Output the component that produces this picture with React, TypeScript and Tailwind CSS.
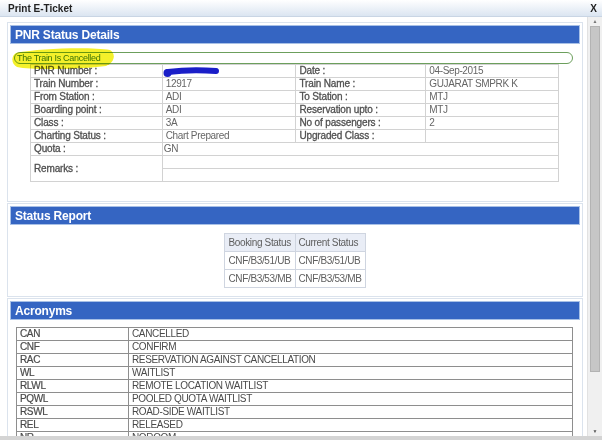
import React from 'react';

const details: [string, string, string, string][] = [
    ['PNR Number :', '', 'Date :', '04-Sep-2015'],
    ['Train Number :', '12917', 'Train Name :', 'GUJARAT SMPRK K'],
    ['From Station :', 'ADI', 'To Station :', 'MTJ'],
    ['Boarding point :', 'ADI', 'Reservation upto :', 'MTJ'],
    ['Class :', '3A', 'No of passengers :', '2'],
    ['Charting Status :', 'Chart Prepared', 'Upgraded Class :', ''],
];

const acronyms: [string, string][] = [
    ['CAN', 'CANCELLED'],
    ['CNF', 'CONFIRM'],
    ['RAC', 'RESERVATION AGAINST CANCELLATION'],
    ['WL', 'WAITLIST'],
    ['RLWL', 'REMOTE LOCATION WAITLIST'],
    ['PQWL', 'POOLED QUOTA WAITLIST'],
    ['RSWL', 'ROAD-SIDE WAITLIST'],
    ['REL', 'RELEASED'],
    ['NR', 'NOROOM'],
];

const Header = ({ title }: { title: string }) => (
    <div className="h-[19px] bg-[#3565c2] border border-[#a8c0e6] flex items-center pl-[4px] text-white font-bold text-[12px] tracking-[-0.2px]">
        {title}
    </div>
);

const cell = 'border border-[#d2d2d2] h-[13px] px-[3px] leading-[12px] text-[10px]';
const label = `${cell} tracking-[-0.15px] text-[#505050] [-webkit-text-stroke:0.3px_#505050]`;
const value = `${cell} tracking-[-0.35px] text-[#666]`;
const stat = 'border border-[#cfd5e0] h-[18px] px-[3px] text-[10px] tracking-[-0.35px] text-[#5e5e5e]';

export default function App() {
    return (
        <div className="w-[602px] h-[440px] overflow-hidden bg-white flex flex-col font-['Liberation_Sans',Arial,sans-serif]">
            {/* Title bar */}
            <div className="h-[17px] shrink-0 bg-gradient-to-b from-[#ffffff] to-[#dbe5f1] border-b border-[#c9d5e4] flex items-center justify-between pl-[8px] pr-[5px]">
                <span className="text-[10px] font-bold text-[#222]">Print E-Ticket</span>
                <span className="text-[10px] font-bold text-[#222]">X</span>
            </div>

            <div className="flex flex-1 min-h-0">
                {/* Content */}
                <div className="w-[587px] pt-[5px] overflow-hidden">
                    {/* PNR Status Details */}
                    <div className="ml-[7px] w-[576px] border border-[#dbe3ed] p-[2px] pb-[19px]">
                        <Header title="PNR Status Details" />
                        <div className="relative ml-[4px] mt-[8px] w-[559px] h-[12px] border border-[#6c9f5c] rounded-[6px] flex items-center pl-[2px]">
                            <span className="text-[9px] tracking-[-0.3px] text-[#3f7a16] leading-none">The Train Is Cancelled</span>
                            <svg className="absolute left-[-4px] top-[-8px] mix-blend-multiply" width="106" height="26" viewBox="0 0 106 26">
                                <path d="M5 8 C 30 3, 80 2, 99 5 C 105 8, 104 18, 95 21 C 60 25, 20 25, 6 22 C 0 19, 0 11, 5 8 Z" fill="#f4f02a" />
                            </svg>
                        </div>
                        <table className="ml-[20px] w-[529px] border-collapse">
                            <colgroup>
                                <col className="w-[132px]" />
                                <col className="w-[134px]" />
                                <col className="w-[130px]" />
                                <col className="w-[133px]" />
                            </colgroup>
                            <tbody>
                                {details.map((r, i) => (
                                    <tr key={i}>
                                        <td className={label}>{r[0]}</td>
                                        <td className={`${value} relative`}>
                                            {r[1]}
                                            {i === 0 && (
                                                <svg className="absolute left-[0px] top-[1px]" width="58" height="12" viewBox="0 0 58 12">
                                                    <path d="M5 6 C 20 4, 40 4, 53 5" stroke="#1a1ec8" strokeWidth="6" strokeLinecap="round" fill="none" />
                                                    <ellipse cx="4.5" cy="7" rx="4" ry="4" fill="#1a1ec8" />
                                                </svg>
                                            )}
                                        </td>
                                        <td className={label}>{r[2]}</td>
                                        <td className={value}>{r[3]}</td>
                                    </tr>
                                ))}
                                <tr>
                                    <td className={label}>Quota :</td>
                                    <td className={`${value} !px-[1px]`} colSpan={3}>GN</td>
                                </tr>
                                <tr>
                                    <td className={label} rowSpan={2}>Remarks :</td>
                                    <td className={value} colSpan={3}></td>
                                </tr>
                                <tr>
                                    <td className={value} colSpan={3}></td>
                                </tr>
                            </tbody>
                        </table>
                    </div>

                    {/* Status Report */}
                    <div className="ml-[7px] mt-[1px] w-[576px] border border-[#dbe3ed] p-[2px] pb-[8px]">
                        <Header title="Status Report" />
                        <table className="mx-auto mt-[8px] border-collapse">
                            <tbody>
                                <tr className="bg-[#e9edf6]">
                                    <td className={stat}>Booking Status</td>
                                    <td className={stat}>Current Status</td>
                                </tr>
                                {[['CNF/B3/51/UB', 'CNF/B3/51/UB'], ['CNF/B3/53/MB', 'CNF/B3/53/MB']].map((r, i) => (
                                    <tr key={i}>
                                        <td className={stat}>{r[0]}</td>
                                        <td className={stat}>{r[1]}</td>
                                    </tr>
                                ))}
                            </tbody>
                        </table>
                    </div>

                    {/* Acronyms */}
                    <div className="ml-[7px] mt-[1px] w-[576px] border border-[#dbe3ed] p-[2px]">
                        <Header title="Acronyms" />
                        <table className="ml-[6px] mt-[7px] w-[557px] border-collapse text-[10px] tracking-[-0.35px] text-[#4a4a4a]">
                            <colgroup>
                                <col className="w-[112px]" />
                                <col />
                            </colgroup>
                            <tbody>
                                {acronyms.map(([k, v]) => (
                                    <tr key={k}>
                                        <td className="border border-[#8e8e8e] h-[13px] px-[3px] leading-[12px] [-webkit-text-stroke:0.2px_#4a4a4a]">{k}</td>
                                        <td className="border border-[#8e8e8e] h-[13px] px-[3px] leading-[12px]">{v}</td>
                                    </tr>
                                ))}
                            </tbody>
                        </table>
                    </div>
                </div>

                {/* Scrollbar */}
                <div className="w-[15px] bg-[#f0f0f0] border-l border-[#e2e2e2] flex flex-col items-center">
                    <div className="h-[9px] flex items-center text-[5px] text-[#777] leading-none">▲</div>
                    <div className="w-[10px] h-[346px] bg-[#c6c6c6] border border-[#b3b3b3]" />
                    <div className="flex-1" />
                    <div className="h-[10px] flex items-center text-[5px] text-[#555] leading-none">▼</div>
                </div>
            </div>

            <div className="h-[4px] shrink-0 bg-[#d4d4d4]" />
        </div>
    );
}
